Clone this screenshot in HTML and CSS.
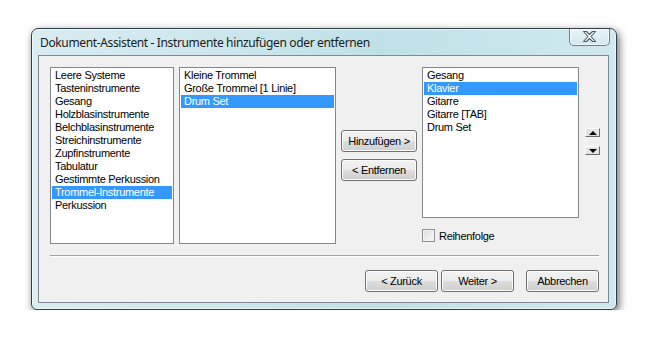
FILE: index.html
```html
<!DOCTYPE html>
<html lang="de">
<head>
    <meta charset="UTF-8">
    <title>Dokument-Assistent</title>
    <link rel="stylesheet" href="styles.css">
</head>
<body>
    <div class="window">
        <div class="title-bar">
            <span class="title">Dokument-Assistent - Instrumente hinzufügen oder entfernen</span>
            <button class="close-button" aria-label="Schließen">
                <svg width="15" height="11" viewBox="0 0 15 11">
                    <path d="M1.5 0.5h3l3 3 3-3h3l-4.5 5 4.5 5h-3l-3-3-3 3h-3l4.5-5z" fill="#fff" stroke="#4a5866" stroke-width="1.1" stroke-linejoin="round"/>
                </svg>
            </button>
        </div>

        <div class="client">
            <div class="top-row">
                <ul class="listbox listbox-groups">
                    <li>Leere Systeme</li>
                    <li>Tasteninstrumente</li>
                    <li>Gesang</li>
                    <li>Holzblasinstrumente</li>
                    <li>Belchblasinstrumente</li>
                    <li>Streichinstrumente</li>
                    <li>Zupfinstrumente</li>
                    <li>Tabulatur</li>
                    <li>Gestimmte Perkussion</li>
                    <li class="selected">Trommel-Instrumente</li>
                    <li>Perkussion</li>
                </ul>

                <ul class="listbox listbox-instruments">
                    <li>Kleine Trommel</li>
                    <li>Große Trommel [1 Linie]</li>
                    <li class="selected">Drum Set</li>
                </ul>

                <div class="move-buttons">
                    <button class="win-button move-button">Hinzufügen &gt;</button>
                    <button class="win-button move-button">&lt; Entfernen</button>
                </div>

                <div class="score-column">
                    <ul class="listbox listbox-score">
                        <li>Gesang</li>
                        <li class="selected">Klavier</li>
                        <li>Gitarre</li>
                        <li>Gitarre [TAB]</li>
                        <li>Drum Set</li>
                    </ul>
                    <label class="checkbox-row">
                        <span class="checkbox"></span>
                        <span>Reihenfolge</span>
                    </label>
                </div>

                <div class="order-buttons">
                    <button class="arrow-button"><span class="arrow-up"></span></button>
                    <button class="arrow-button"><span class="arrow-down"></span></button>
                </div>
            </div>

            <div class="separator"></div>

            <div class="footer">
                <button class="win-button footer-button">&lt; Zurück</button>
                <button class="win-button footer-button">Weiter &gt;</button>
                <button class="win-button footer-button cancel">Abbrechen</button>
            </div>
        </div>
    </div>
</body>
</html>
```

FILE: styles.css
```css
body {
    margin: 0;
    background: #fff;
    font-family: "Liberation Sans", Arial, sans-serif;
    font-size: 11px;
    letter-spacing: -0.3px;
    color: #000;
}
ul {
    margin: 0;
    padding: 0;
    list-style: none;
}
button {
    font-family: inherit;
    font-size: 11px;
    letter-spacing: -0.3px;
    color: #000;
    padding: 0;
    cursor: pointer;
}

/* Fensterrahmen */
.window {
    margin: 28px 0 0 31px;
    width: 586px;
    height: 282px;
    box-sizing: border-box;
    border: 1px solid #323c46;
    border-radius: 7px 7px 6px 6px;
    padding: 0 7px 6px 6px;
    background: linear-gradient(to right, #d9edf2 0%, #cbe6ec 35%, #bfe0e7 60%, #d0e9ef 100%);
    box-shadow: 2px 3px 9px rgba(0, 0, 0, 0.6), inset 0 0 0 1px rgba(255, 255, 255, 0.6);
    display: flex;
    flex-direction: column;
}
.title-bar {
    height: 26px;
    display: flex;
    justify-content: space-between;
    align-items: flex-start;
}
.title {
    font-family: "Noto Sans", "Open Sans", sans-serif;
    font-size: 12px;
    color: #1b1b1b;
    margin: 5px 0 0 2px;
    letter-spacing: -0.36px;
}
.close-button {
    width: 41px;
    height: 17px;
    margin-right: -1px;
    border: 1px solid #6d7e8c;
    border-top: none;
    border-radius: 0 0 5px 5px;
    background: linear-gradient(#e9f4f7, #d3e8ee);
    box-shadow: inset 0 0 0 1px rgba(255, 255, 255, 0.7);
    display: flex;
    align-items: center;
    justify-content: center;
}
.close-button svg {
    display: block;
    margin-top: -1px;
}

/* Inhaltsbereich */
.client {
    flex: 1;
    background: #f0f0f0;
    border: 1px solid #7e8994;
    padding: 11px 0 0 11px;
    display: flex;
    flex-direction: column;
}
.top-row {
    display: flex;
    align-items: flex-start;
}
.listbox {
    box-sizing: border-box;
    background: #fff;
    border: 1px solid #828790;
    padding: 1px;
}
.listbox li {
    height: 13px;
    line-height: 13px;
    padding-left: 3px;
    white-space: nowrap;
}
.listbox li.selected {
    background: #3399ff;
    color: #fff;
}
.listbox-groups {
    width: 124px;
    height: 177px;
}
.listbox-instruments {
    width: 157px;
    height: 177px;
    margin-left: 5px;
}
.listbox-score {
    width: 157px;
    height: 151px;
}
.move-buttons {
    margin: 63px 0 0 5px;
    display: flex;
    flex-direction: column;
    gap: 7px;
}
.score-column {
    margin-left: 5px;
    display: flex;
    flex-direction: column;
}
.checkbox-row {
    margin-top: 11px;
    display: flex;
    align-items: center;
    gap: 4px;
    height: 13px;
}
.checkbox {
    width: 13px;
    height: 13px;
    box-sizing: border-box;
    border: 1px solid #8f8f8f;
    background: linear-gradient(135deg, #dcdcdc, #fbfbfb);
    box-shadow: inset 0 0 0 1px #f4f4f4;
}
.order-buttons {
    margin: 61px 0 0 6px;
    display: flex;
    flex-direction: column;
    gap: 9px;
}
.arrow-button {
    width: 15px;
    height: 9px;
    box-sizing: border-box;
    border: 1px solid;
    border-color: #fff #6a6a6a #6a6a6a #fff;
    background: #e4e4e4;
    display: flex;
    align-items: center;
    justify-content: center;
}
.arrow-up {
    border-left: 4px solid transparent;
    border-right: 4px solid transparent;
    border-bottom: 4px solid #000;
}
.arrow-down {
    border-left: 4px solid transparent;
    border-right: 4px solid transparent;
    border-top: 4px solid #000;
}

/* Schaltflächen */
.win-button {
    height: 22px;
    box-sizing: border-box;
    border: 1px solid #707070;
    border-radius: 3px;
    background: linear-gradient(#f2f2f2 0%, #ebebeb 50%, #dddddd 51%, #cfcfcf 100%);
    box-shadow: inset 0 0 0 1px #fcfcfc;
}
.move-button {
    width: 76px;
}
.separator {
    margin-top: 11px;
    width: 549px;
    height: 1px;
    background: #a0a0a0;
    border-bottom: 1px solid #fff;
}
.footer {
    margin-top: 13px;
    width: 549px;
    display: flex;
    justify-content: flex-end;
    gap: 3px;
}
.footer-button {
    width: 73px;
}
.footer-button.cancel {
    margin-left: 9px;
}
```
